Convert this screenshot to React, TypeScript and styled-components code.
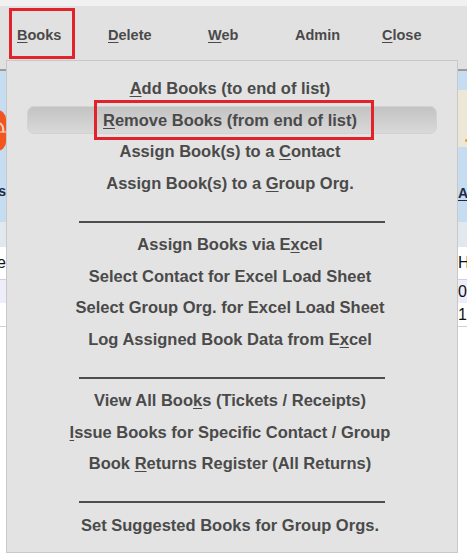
import React from "react";
import styled, { createGlobalStyle, css } from "styled-components";

const GlobalStyle = createGlobalStyle`
  html, body { margin: 0; padding: 0; background: #ffffff; }
  body { font-family: "Liberation Sans", Arial, sans-serif; }
  * { box-sizing: border-box; }
`;

const RED = "#e3232b";
const INK = "#4a4a4a";

const Page = styled.div`
  position: relative;
  width: 467px;
  height: 554px;
  overflow: hidden;
  background: #ffffff;
`;

const TopStrip = styled.div`
  height: 6px;
  background: #f1f1f1;
`;

const Toolbar = styled.nav`
  height: 65px;
  padding: 21px 0 0 17px;
  background: #e1e1e1;
  border-bottom: 2px solid #9b9b9b;
  display: grid;
  grid-template-columns: 91px 100px 87px 87px auto;
  align-items: start;
`;

const ToolItem = styled.span<{ $selected?: boolean }>`
  position: relative;
  justify-self: start;
  font-size: 14.5px;
  line-height: 17px;
  font-weight: bold;
  color: ${INK};
  white-space: nowrap;
  ${(p) =>
    p.$selected &&
    css`
      &::after {
        content: "";
        position: absolute;
        top: -19px;
        left: -8px;
        right: -14px;
        bottom: -15px;
        border: 3px solid ${RED};
      }
    `}
`;

const U = styled.span`
  text-decoration: underline;
  text-decoration-thickness: 1px;
  text-underline-offset: 2px;
`;

const Banner = styled.section`
  height: 151px;
  background: #c6dcf0;
  display: flex;
  justify-content: space-between;
`;

const EdgeTile = styled.div<{ $side: "left" | "right" }>`
  width: ${(p) => (p.$side === "left" ? "6px" : "9px")};
  overflow: hidden;
  display: flex;
  flex-direction: column;
  align-items: ${(p) => (p.$side === "left" ? "flex-end" : "flex-start")};
`;

const TileIcon = styled.div<{ $top: number }>`
  margin-top: ${(p) => p.$top}px;
  flex: none;
  display: flex;
`;

const MapPatch = styled.div`
  margin-top: 19px;
  width: 40px;
  height: 57px;
  background: #ece7d6;
  display: flex;
  align-items: flex-end;
  padding: 0 0 5px 7px;
`;

const Dot = styled.span`
  width: 3px;
  height: 3px;
  border-radius: 50%;
  background: #f0a020;
`;

const TileLabel = styled.span<{ $top: number }>`
  margin-top: ${(p) => p.$top}px;
  font-size: 14px;
  line-height: 16px;
  font-weight: bold;
  color: #1e2a44;
  white-space: nowrap;
`;

const SubBar = styled.div`
  height: 25px;
  background: #e3e8ef;
`;

const Row = styled.div<{ $tone: "head" | "lav" | "white"; $h: number; $line?: boolean }>`
  height: ${(p) => p.$h}px;
  display: flex;
  justify-content: space-between;
  align-items: center;
  background: ${(p) => (p.$tone === "lav" ? "#eeeefb" : "#ffffff")};
  border-bottom: ${(p) => (p.$line ? "1px solid #cfd2da" : "none")};
  font-size: 16px;
  color: #111;
`;

const Cell = styled.div<{ $side: "left" | "right" }>`
  width: ${(p) => (p.$side === "left" ? "6px" : "9px")};
  overflow: hidden;
  display: flex;
  justify-content: ${(p) => (p.$side === "left" ? "flex-end" : "flex-start")};
  white-space: nowrap;
`;

const Menu = styled.div`
  position: absolute;
  left: 6px;
  top: 60px;
  width: 452px;
  height: 493px;
  background: #e3e3e3;
  border: 1px solid #c8c8c8;
  padding-top: 12px;
  display: flex;
  flex-direction: column;
  z-index: 2;
`;

const MenuItem = styled.div<{ $active?: boolean }>`
  height: 28px;
  margin: 1.75px 20px;
  display: flex;
  align-items: center;
  justify-content: center;
  font-size: 16.5px;
  line-height: 19px;
  font-weight: bold;
  color: ${INK};
  white-space: nowrap;
  border-radius: 7px;
  border: 1px solid transparent;
  ${(p) =>
    p.$active &&
    css`
      background: linear-gradient(#c3c3c3, #d9d9d9);
      border-color: #d2d2d2;
    `}
`;

const Label = styled.span<{ $boxed?: boolean }>`
  position: relative;
  margin-right: 4px;
  ${(p) =>
    p.$boxed &&
    css`
      &::after {
        content: "";
        position: absolute;
        top: -11px;
        bottom: -10px;
        left: -9px;
        right: -17px;
        border: 3px solid ${RED};
      }
    `}
`;

const Separator = styled.hr`
  width: 306px;
  height: 2px;
  margin: 21.5px auto 6.5px;
  border: 0;
  background: #4e4e4e;
`;

type Item = { parts: (string | { u: string })[]; active?: boolean };

const groups: Item[][] = [
  [
    { parts: [{ u: "A" }, "dd Books (to end of list)"] },
    { parts: [{ u: "R" }, "emove Books (from end of list)"], active: true },
    { parts: ["Assign Book(s) to a ", { u: "C" }, "ontact"] },
    { parts: ["Assign Book(s) to a ", { u: "G" }, "roup Org."] },
  ],
  [
    { parts: ["Assign Books via E", { u: "x" }, "cel"] },
    { parts: ["Select Contact for Excel Load Sheet"] },
    { parts: ["Select Group Org. for Excel Load Sheet"] },
    { parts: ["Log Assigned Book Data from E", { u: "x" }, "cel"] },
  ],
  [
    { parts: ["View All Boo", { u: "k" }, "s (Tickets / Receipts)"] },
    { parts: [{ u: "I" }, "ssue Books for Specific Contact / Group"] },
    { parts: ["Book ", { u: "R" }, "eturns Register (All Returns)"] },
  ],
  [{ parts: ["Set Suggested Books for Group Orgs."] }],
];

const renderParts = (parts: Item["parts"]) =>
  parts.map((p, i) => (typeof p === "string" ? <React.Fragment key={i}>{p}</React.Fragment> : <U key={i}>{p.u}</U>));

const OrangeBadge = () => (
  <svg width="40" height="41" viewBox="0 0 40 41">
    <rect x="0" y="0" width="40" height="41" rx="9" fill="#f2561d" />
    <path d="M30 12 C36 13 38 17 37 22" stroke="#f8cdb8" strokeWidth="2.2" fill="none" />
    <path d="M30 22 L40 22" stroke="#f7d2c0" strokeWidth="1.2" />
  </svg>
);

export default function App() {
  return (
    <>
      <GlobalStyle />
      <Page>
        <TopStrip />
        <Toolbar>
          <ToolItem $selected>
            <U>B</U>ooks
          </ToolItem>
          <ToolItem>
            <U>D</U>elete
          </ToolItem>
          <ToolItem>
            <U>W</U>eb
          </ToolItem>
          <ToolItem>Admin</ToolItem>
          <ToolItem>
            <U>C</U>lose
          </ToolItem>
        </Toolbar>

        <Banner>
          <EdgeTile $side="left">
            <TileIcon $top={39}>
              <OrangeBadge />
            </TileIcon>
            <TileLabel $top={32}>
              L<U>i</U>s
            </TileLabel>
          </EdgeTile>
          <EdgeTile $side="right">
            <MapPatch>
              <Dot />
            </MapPatch>
            <TileLabel $top={38}>
              <U>A</U>ctions
            </TileLabel>
          </EdgeTile>
        </Banner>
        <SubBar />
        <Row $tone="head" $h={33} $line>
          <Cell $side="left">Name</Cell>
          <Cell $side="right">Hist</Cell>
        </Row>
        <Row $tone="lav" $h={23}>
          <Cell $side="left"></Cell>
          <Cell $side="right">0</Cell>
        </Row>
        <Row $tone="white" $h={24} $line>
          <Cell $side="left"></Cell>
          <Cell $side="right">1</Cell>
        </Row>

        <Menu>
          {groups.map((g, gi) => (
            <React.Fragment key={gi}>
              {gi > 0 && <Separator />}
              {g.map((it, ii) => (
                <MenuItem key={ii} $active={it.active}>
                  <Label $boxed={it.active}>{renderParts(it.parts)}</Label>
                </MenuItem>
              ))}
            </React.Fragment>
          ))}
        </Menu>
      </Page>
    </>
  );
}
